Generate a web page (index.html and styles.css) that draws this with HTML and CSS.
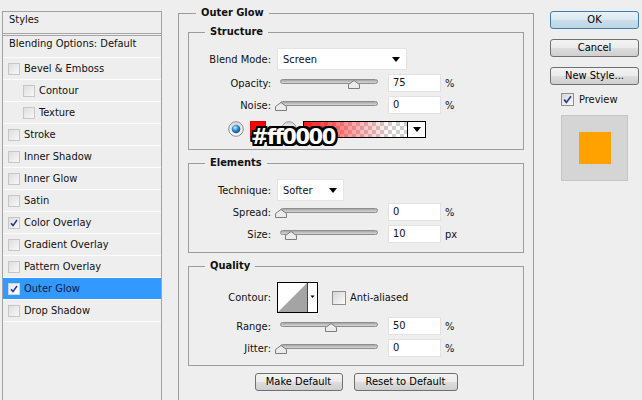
FILE: index.html
```html
<!DOCTYPE html>
<html>
<head>
<meta charset="utf-8">
<title>Layer Style</title>
<link rel="stylesheet" href="styles.css">
</head>
<body>
<div class="dialog">
  <div class="styles-panel">
    <div class="panel-head">Styles</div>
    <div class="panel-blend">Blending Options: Default</div>
    <div class="panel-row"><span class="cb"></span>Bevel &amp; Emboss</div>
    <div class="panel-row sub"><span class="cb"></span>Contour</div>
    <div class="panel-row sub"><span class="cb"></span>Texture</div>
    <div class="panel-row"><span class="cb"></span>Stroke</div>
    <div class="panel-row"><span class="cb"></span>Inner Shadow</div>
    <div class="panel-row"><span class="cb"></span>Inner Glow</div>
    <div class="panel-row"><span class="cb"></span>Satin</div>
    <div class="panel-row"><span class="cb"><svg width="10" height="10" viewBox="0 0 10 10"><path d="M2 5.2 L4 7.6 L8 2" fill="none" stroke="#26338a" stroke-width="1.5"/></svg></span>Color Overlay</div>
    <div class="panel-row"><span class="cb"></span>Gradient Overlay</div>
    <div class="panel-row"><span class="cb"></span>Pattern Overlay</div>
    <div class="panel-row active"><span class="cb light"><svg width="10" height="10" viewBox="0 0 10 10"><path d="M2 5.2 L4 7.6 L8 2" fill="none" stroke="#26338a" stroke-width="1.5"/></svg></span>Outer Glow</div>
    <div class="panel-row"><span class="cb"></span>Drop Shadow</div>
  </div>

  <div class="settings">
    <fieldset class="group outer">
      <legend>Outer Glow</legend>

      <fieldset class="group inner structure">
        <legend>Structure</legend>
        <div class="row">
          <span class="lbl">Blend Mode:</span>
          <div class="select blend"><span>Screen</span><span class="arrow"></span></div>
        </div>
        <div class="row gap">
          <span class="lbl">Opacity:</span>
          <div class="slider"><span class="track"></span><svg class="thumb" style="left:71px" width="12" height="9" viewBox="0 0 12 9"><polygon points="0.5,8.5 0.5,4.5 6,0.5 11.5,4.5 11.5,8.5" fill="#ececec" stroke="#7c7c7c"/></svg></div>
          <span class="field">75</span><span class="unit">%</span>
        </div>
        <div class="row">
          <span class="lbl">Noise:</span>
          <div class="slider"><span class="track"></span><svg class="thumb" style="left:-2px" width="12" height="9" viewBox="0 0 12 9"><polygon points="0.5,8.5 0.5,4.5 6,0.5 11.5,4.5 11.5,8.5" fill="#ececec" stroke="#7c7c7c"/></svg></div>
          <span class="field">0</span><span class="unit">%</span>
        </div>
        <div class="row color-row">
          <svg class="radio" width="16" height="16" viewBox="0 0 16 16">
            <defs><radialGradient id="rb" cx="0.4" cy="0.35" r="0.75"><stop offset="0" stop-color="#c8ecff"/><stop offset="0.45" stop-color="#2f8fd0"/><stop offset="1" stop-color="#0b3a66"/></radialGradient>
            <linearGradient id="rf" x1="0" y1="0" x2="0" y2="1"><stop offset="0" stop-color="#d8d8d8"/><stop offset="1" stop-color="#fbfbfb"/></linearGradient></defs>
            <circle cx="8" cy="8" r="7.3" fill="url(#rf)" stroke="#8f9090"/>
            <circle cx="8" cy="8" r="4.3" fill="url(#rb)"/>
          </svg>
          <span class="swatch"></span>
          <svg class="radio off" width="16" height="16" viewBox="0 0 16 16">
            <circle cx="8" cy="8" r="7.3" fill="url(#rf)" stroke="#9a9a9a"/>
          </svg>
          <div class="gradient"><span class="ramp"></span><span class="drop"><span class="arrow"></span></span></div>
          <span class="hex">#ff0000</span>
        </div>
      </fieldset>

      <fieldset class="group inner elements">
        <legend>Elements</legend>
        <div class="row">
          <span class="lbl">Technique:</span>
          <div class="select tech"><span>Softer</span><span class="arrow"></span></div>
        </div>
        <div class="row">
          <span class="lbl">Spread:</span>
          <div class="slider"><span class="track"></span><svg class="thumb" style="left:-2px" width="12" height="9" viewBox="0 0 12 9"><polygon points="0.5,8.5 0.5,4.5 6,0.5 11.5,4.5 11.5,8.5" fill="#ececec" stroke="#7c7c7c"/></svg></div>
          <span class="field">0</span><span class="unit">%</span>
        </div>
        <div class="row">
          <span class="lbl">Size:</span>
          <div class="slider"><span class="track"></span><svg class="thumb" style="left:8px" width="12" height="9" viewBox="0 0 12 9"><polygon points="0.5,8.5 0.5,4.5 6,0.5 11.5,4.5 11.5,8.5" fill="#ececec" stroke="#7c7c7c"/></svg></div>
          <span class="field">10</span><span class="unit">px</span>
        </div>
      </fieldset>

      <fieldset class="group inner quality">
        <legend>Quality</legend>
        <div class="row contour-row">
          <span class="lbl">Contour:</span>
          <svg class="contour" width="41" height="31" viewBox="0 0 41 31">
            <rect x="0.5" y="0.5" width="40" height="30" fill="#fff" stroke="#000"/>
            <polygon points="1,30 30,1 30,30" fill="#a4a4a4"/>
            <line x1="30.5" y1="1" x2="30.5" y2="30" stroke="#444"/>
            <polygon points="33.5,13.5 37.5,13.5 35.5,16" fill="#000"/>
          </svg>
          <span class="box"></span>
          <span class="aa">Anti-aliased</span>
        </div>
        <div class="row">
          <span class="lbl">Range:</span>
          <div class="slider"><span class="track"></span><svg class="thumb" style="left:48px" width="12" height="9" viewBox="0 0 12 9"><polygon points="0.5,8.5 0.5,4.5 6,0.5 11.5,4.5 11.5,8.5" fill="#ececec" stroke="#7c7c7c"/></svg></div>
          <span class="field">50</span><span class="unit">%</span>
        </div>
        <div class="row">
          <span class="lbl">Jitter:</span>
          <div class="slider"><span class="track"></span><svg class="thumb" style="left:-2px" width="12" height="9" viewBox="0 0 12 9"><polygon points="0.5,8.5 0.5,4.5 6,0.5 11.5,4.5 11.5,8.5" fill="#ececec" stroke="#7c7c7c"/></svg></div>
          <span class="field">0</span><span class="unit">%</span>
        </div>
      </fieldset>

      <div class="actions">
        <button class="btn make">Make Default</button>
        <button class="btn reset">Reset to Default</button>
      </div>
    </fieldset>
  </div>

  <div class="side">
    <button class="btn side-btn primary">OK</button>
    <button class="btn side-btn">Cancel</button>
    <button class="btn side-btn">New Style...</button>
    <div class="preview-toggle">
      <span class="box checked"><svg width="11" height="11" viewBox="0 0 11 11"><path d="M2.2 5.6 L4.4 8.4 L9 2.2" fill="none" stroke="#2a3d96" stroke-width="1.7"/></svg></span>
      <span>Preview</span>
    </div>
    <div class="preview"><span class="preview-swatch"></span></div>
  </div>
</div>
</body>
</html>
```

FILE: styles.css
```css
* { box-sizing: border-box; }

html, body {
  margin: 0;
  height: 100%;
}

body {
  background: #eeeeee;
  color: #111;
  font-family: "DejaVu Sans Condensed", "Liberation Sans", sans-serif;
  font-size: 11px;
  overflow: hidden;
}

.dialog {
  display: flex;
  align-items: flex-start;
  height: 400px;
}

/* ---------- left styles list ---------- */
.styles-panel {
  flex: none;
  width: 160px;
  height: 420px;
  margin: 11px 0 0 2px;
  border: 1px solid #a2a2a2;
  background: #eeeeee;
}

.panel-head {
  height: 24px;
  line-height: 15px;
  padding-left: 6px;
  border-bottom: 3px double #a6a6a6;
}

.panel-blend {
  height: 22px;
  line-height: 14px;
  padding: 1px 0 0 6px;
  border-bottom: 1px solid #fbfbfb;
}

.panel-row {
  display: flex;
  align-items: center;
  gap: 4px;
  height: 22px;
  padding-left: 5px;
  border-bottom: 1px solid #fbfbfb;
}

.panel-row.sub { padding-left: 20px; }

.panel-row.active {
  background: #3399ff;
  color: #0c1b4d;
}

.cb {
  flex: none;
  display: flex;
  align-items: center;
  justify-content: center;
  width: 12px;
  height: 12px;
  border: 1px solid #c6c6c6;
  background: linear-gradient(135deg, #dedede, #f8f8f8);
}

.cb.light { background: linear-gradient(135deg, #e4e9f3, #ffffff); border-color: #c9d3e4; }

/* ---------- settings ---------- */
.settings {
  flex: none;
  width: 356px;
  margin-left: 16px;
}

.group {
  border: 1px solid #9c9c9c;
  min-width: 0;
}

.group > legend {
  font-weight: bold;
  line-height: 14px;
  padding: 0 5px;
}

.outer {
  margin: 6px 0 0;
  padding: 5px 9px 0;
  height: 430px;
}

.outer > legend { margin-left: 8px; }

.inner {
  margin: 0;
  padding: 9px 0 7px;
}

.inner > legend { margin-left: 16px; }

.elements, .quality { margin-top: 6px; }
.quality { padding-bottom: 6px; }

.row {
  display: flex;
  align-items: center;
  height: 22px;
}

.row.gap { margin-top: 2px; }

.lbl {
  flex: none;
  width: 82px;
  margin-right: 6px;
  text-align: right;
}

.select {
  display: flex;
  align-items: center;
  justify-content: space-between;
  height: 22px;
  padding: 0 6px 0 5px;
  background: #fff;
  border: 1px solid #e4e4e4;
}

.select.blend { width: 130px; }
.select.tech { width: 67px; }

.arrow {
  width: 0;
  height: 0;
  border-left: 4px solid transparent;
  border-right: 4px solid transparent;
  border-top: 5px solid #000;
}

.slider {
  flex: none;
  position: relative;
  width: 104px;
  height: 22px;
}

.track {
  display: block;
  height: 5px;
  margin: 7px 3px 0;
  border: 1px solid #8e8e8e;
  border-radius: 3px;
  background: linear-gradient(#a6a6a6, #d8d8d8);
}

.thumb {
  position: absolute;
  top: 8px;
}

.field {
  flex: none;
  width: 53px;
  height: 18px;
  margin-left: 7px;
  padding-left: 4px;
  line-height: 16px;
  background: #fff;
  border: 1px solid #e2e2e2;
}

.unit { margin-left: 4px; }

/* colour row */
.color-row {
  position: relative;
  height: 26px;
  padding-left: 39px;
}

.radio { flex: none; }

.swatch {
  flex: none;
  width: 16px;
  height: 16px;
  margin: 0 15px 0 6px;
  background: #ff0000;
  border: 1px solid #d40000;
}

.gradient {
  display: flex;
  width: 123px;
  height: 17px;
  margin-left: 6px;
  border: 1px solid #000;
}

.ramp {
  flex: 1;
  background:
    linear-gradient(to right, rgba(255, 0, 0, 0.9), rgba(255, 40, 40, 0.45) 45%, rgba(255, 0, 0, 0) 85%),
    conic-gradient(#cfcfcf 25%, #ffffff 0 50%, #cfcfcf 0 75%, #ffffff 0) 0 0 / 8px 8px;
}

.drop {
  flex: none;
  display: flex;
  align-items: center;
  justify-content: center;
  width: 18px;
  background: #fff;
  border-left: 1px solid #000;
}

.hex {
  position: absolute;
  left: 62px;
  top: 11px;
  font-family: "DejaVu Sans", sans-serif;
  font-weight: bold;
  font-size: 21px;
  line-height: 21px;
  letter-spacing: -1.5px;
  color: #fff;
  text-shadow:
    -2px -2px 0 #000, 0 -2px 0 #000, 2px -2px 0 #000,
    2px 0 0 #000, 2px 2px 0 #000, 0 2px 0 #000,
    -2px 2px 0 #000, -2px 0 0 #000,
    -1px -2px 0 #000, 1px -2px 0 #000, -1px 2px 0 #000, 1px 2px 0 #000,
    -2px -1px 0 #000, -2px 1px 0 #000, 2px -1px 0 #000, 2px 1px 0 #000;
}

/* quality */
.contour-row {
  height: 31px;
  margin-bottom: 2px;
}

.contour { flex: none; }

.box {
  flex: none;
  display: flex;
  align-items: center;
  justify-content: center;
  width: 14px;
  height: 14px;
  border: 1px solid #8f8f8f;
  background: linear-gradient(135deg, #d6d6d6, #fbfbfb);
}

.contour-row .box { margin: 0 4px 0 14px; }

/* buttons */
.actions {
  display: flex;
  justify-content: center;
  gap: 11px;
  margin-top: 7px;
}

.btn {
  height: 18px;
  padding: 0;
  font: inherit;
  color: #000;
  line-height: 16px;
  text-align: center;
  border: 1px solid #707070;
  border-radius: 3px;
  background: linear-gradient(#f3f3f3 0%, #ebebeb 50%, #dddddd 51%, #cfcfcf 100%);
}

.make { width: 88px; }
.reset { width: 104px; }

/* ---------- right column ---------- */
.side {
  flex: none;
  display: flex;
  flex-direction: column;
  align-items: flex-start;
  gap: 10px;
  width: 89px;
  margin-left: 16px;
  padding-top: 11px;
}

.side-btn { width: 89px; }

.primary {
  border-color: #3c7fb1;
  background: linear-gradient(#e9f2f8 0%, #d9e8f1 50%, #c9dde9 51%, #bfd6e5 100%);
}

.preview-toggle {
  display: flex;
  align-items: center;
  gap: 5px;
  margin: -2px 0 0 11px;
}

.preview-toggle .box { width: 13px; height: 13px; }

.preview {
  display: flex;
  align-items: center;
  justify-content: center;
  width: 67px;
  height: 66px;
  margin: -1px 0 0 11px;
  background: #d5d5d5;
  border: 1px solid #c6c6c6;
}

.preview-swatch {
  width: 32px;
  height: 32px;
  background: #ffa200;
}
```
